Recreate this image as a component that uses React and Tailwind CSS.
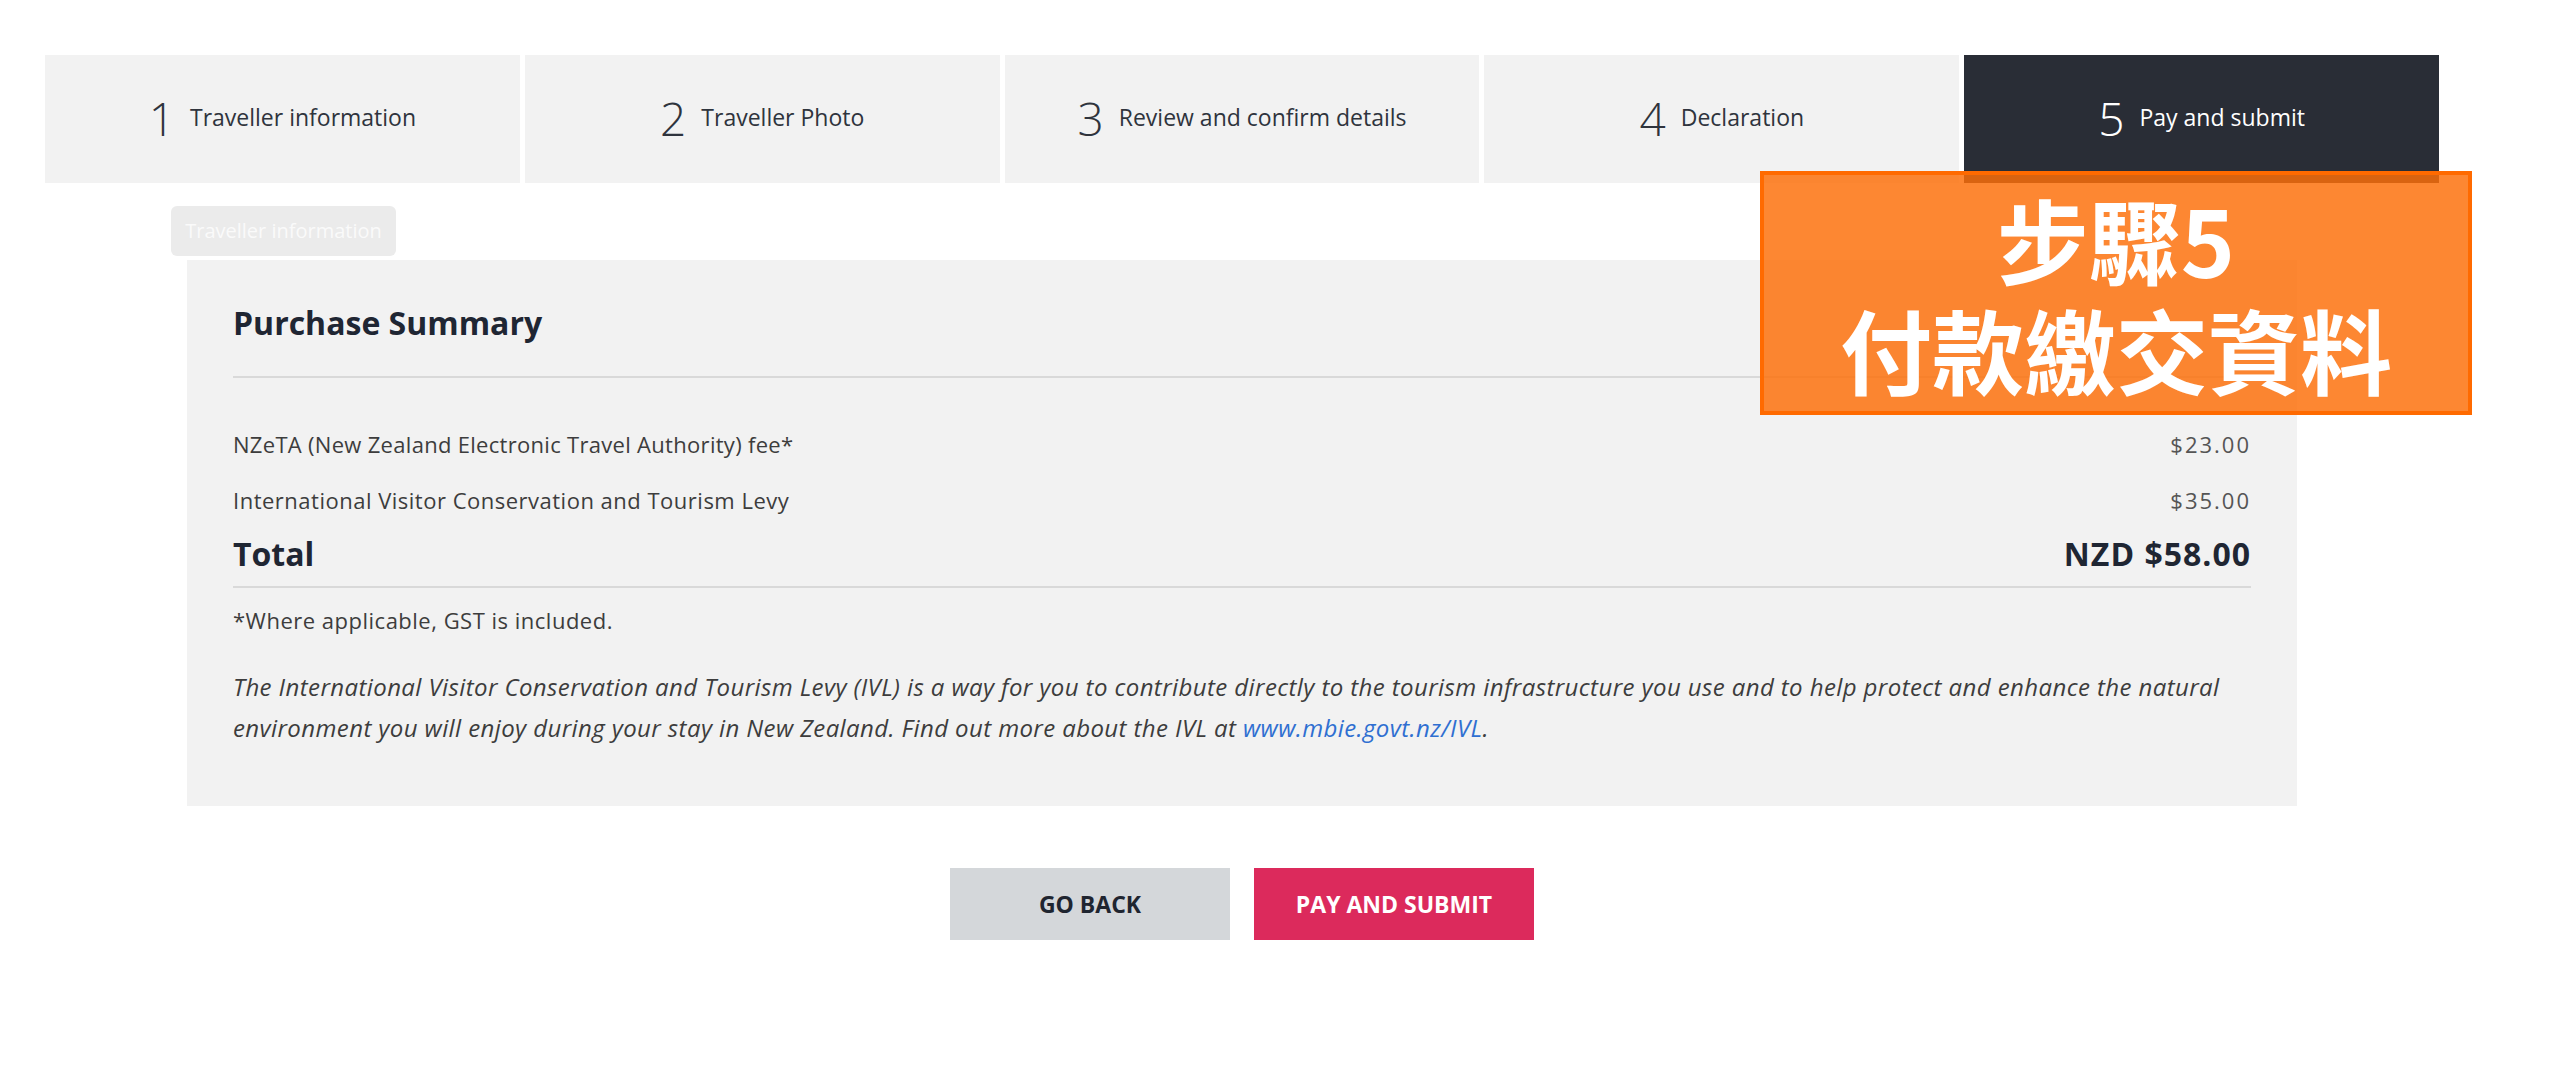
import React from 'react';

const steps = [
  { n: 1, label: 'Traveller information' },
  { n: 2, label: 'Traveller Photo' },
  { n: 3, label: 'Review and confirm details' },
  { n: 4, label: 'Declaration' },
  { n: 5, label: 'Pay and submit', active: true },
];

export default function App() {
  return (
    <div className="relative w-[2560px] h-[1076px] bg-white overflow-hidden font-['Open_Sans',sans-serif] text-[#333]">
      {/* Step bar */}
      <div className="ml-[45px] mt-[55px] w-[2394px] h-[128px] flex gap-[5px]">
        {steps.map(s => (
          <div key={s.n}
            className={`flex-1 flex items-center justify-center gap-[15px] pb-[3px] ${s.active ? 'bg-[#292d36] text-white' : 'bg-[#f2f2f2] text-[#2f343d]'}`}>
            <span className="text-[46px] font-light leading-none">{s.n}</span>
            <span className="text-[23px] leading-none">{s.label}</span>
          </div>
        ))}
      </div>

      {/* Section tag */}
      <div className="ml-[171px] mt-[23px] w-[225px] h-[50px] rounded-[6px] bg-[#ebebeb] text-[#fafafa] text-[20px] flex items-center justify-center">
        Traveller information
      </div>

      {/* Purchase summary panel */}
      <div className="ml-[187px] mt-[4px] w-[2110px] bg-[#f2f2f2] px-[46px] pt-[43px] pb-[58px]">
        <h2 className="text-[32px] leading-[40px] font-bold text-[#1f2633]">Purchase Summary</h2>
        <div className="mt-[33px] h-[2px] bg-[#d9d9d9]" />

        <div className="mt-[50px] flex justify-between text-[22px] leading-[32px] tracking-[0.3px]">
          <span className="text-[#3d3d3d]">NZeTA (New Zealand Electronic Travel Authority) fee*</span>
          <span className="text-[#555] tracking-[2px]">$23.00</span>
        </div>
        <div className="mt-[24px] flex justify-between text-[22px] leading-[32px] tracking-[0.5px]">
          <span className="text-[#3d3d3d]">International Visitor Conservation and Tourism Levy</span>
          <span className="text-[#555] tracking-[2px]">$35.00</span>
        </div>
        <div className="mt-[16px] flex justify-between text-[32px] leading-[44px] font-bold text-[#1f2633]">
          <span>Total</span>
          <span className="tracking-[1px]">NZD $58.00</span>
        </div>
        <div className="mt-[10px] h-[2px] bg-[#d9d9d9]" />

        <p className="mt-[16px] text-[22px] leading-[32px] tracking-[0.5px] text-[#3d3d3d]">*Where applicable, GST is included.</p>

        <p className="mt-[30px] text-[24px] leading-[41px] tracking-[0.4px] italic text-[#3d3d3d]">
          The International Visitor Conservation and Tourism Levy (IVL) is a way for you to contribute directly to the tourism infrastructure you use and to help protect and enhance the natural environment you will enjoy during your stay in New Zealand. Find out more about the IVL at <a href="#" className="text-[#2f6fd1]">www.mbie.govt.nz/IVL</a>.
        </p>
      </div>

      {/* Actions */}
      <div className="ml-[187px] w-[2110px] mt-[62px] flex justify-center gap-[24px]">
        <button className="w-[280px] h-[72px] bg-[#d4d7da] text-[#1f2530] text-[23px] font-bold uppercase">Go back</button>
        <button className="w-[280px] h-[72px] bg-[#dc2a5c] text-white text-[23px] font-bold uppercase">Pay and submit</button>
      </div>

      {/* Annotation overlay */}
      <div className="absolute left-[1760px] top-[171px] w-[712px] h-[244px] border-[4px] border-[#ff6a00] bg-[rgba(253,111,8,0.83)] flex flex-col items-center justify-center text-white font-bold text-[92px] leading-[110px] font-['Noto_Sans_CJK_TC','Noto_Sans_CJK_SC',sans-serif]">
        <span>步驟5</span>
        <span>付款繳交資料</span>
      </div>
    </div>
  );
}
